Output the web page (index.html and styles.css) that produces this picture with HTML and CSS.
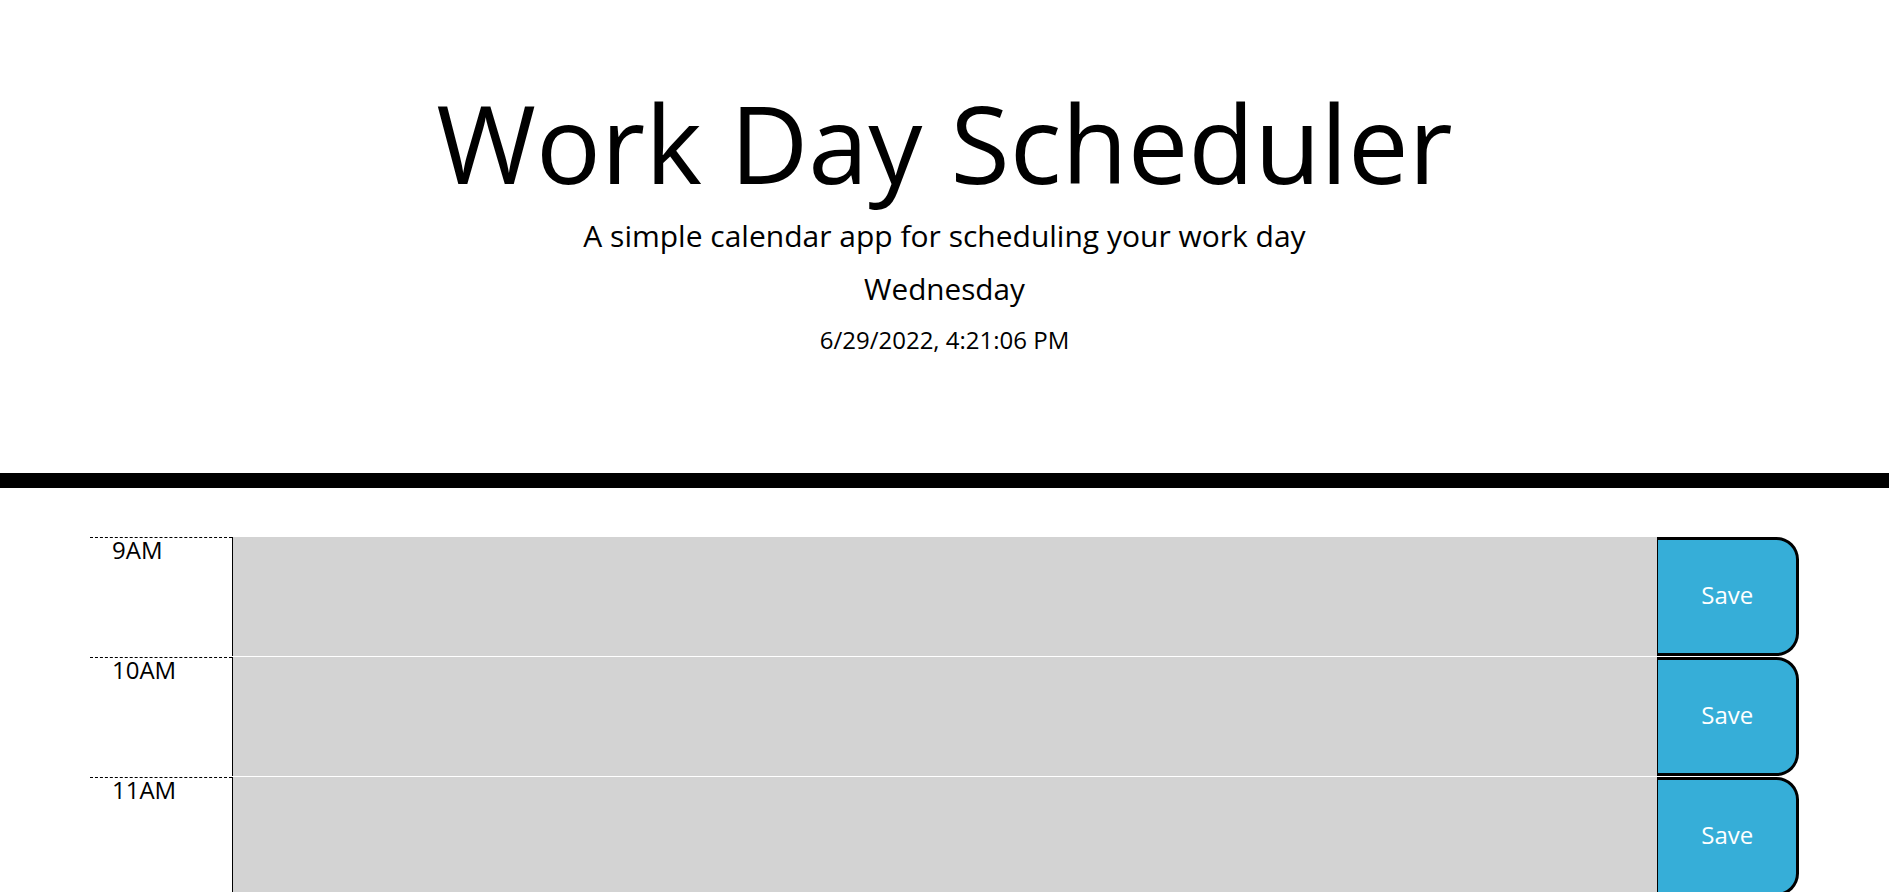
FILE: index.html
```html
<!DOCTYPE html>
<html lang="en">
<head>
<meta charset="UTF-8">
<title>Work Day Scheduler</title>
<link rel="stylesheet" href="styles.css">
</head>
<body>
<header class="jumbotron">
  <h1 class="title">Work Day Scheduler</h1>
  <p class="lead">A simple calendar app for scheduling your work day</p>
  <p class="day">Wednesday</p>
  <p class="date">6/29/2022, 4:21:06 PM</p>
</header>
<main class="container">
  <div class="row time-block">
    <div class="hour">9AM</div>
    <textarea class="description past"></textarea>
    <button class="saveBtn">Save</button>
  </div>
  <div class="row time-block">
    <div class="hour">10AM</div>
    <textarea class="description past"></textarea>
    <button class="saveBtn">Save</button>
  </div>
  <div class="row time-block">
    <div class="hour">11AM</div>
    <textarea class="description past"></textarea>
    <button class="saveBtn">Save</button>
  </div>
</main>
</body>
</html>
```
FILE: styles.css
```css
* {
  box-sizing: border-box;
}

html,
body {
  margin: 0;
  padding: 0;
}

body {
  font-family: "Open Sans", "Noto Sans", sans-serif;
  font-size: 24px;
  line-height: 1;
  color: #000;
  background: #fff;
}

.jumbotron {
  text-align: center;
  padding: 89px 48px 121px;
  border-bottom: 15px solid #000;
  margin-bottom: 48px;
}

.title {
  margin: 0;
  font-size: 108px;
  font-weight: 400;
  line-height: 108px;
}

.lead {
  margin: 24px 0 0;
  font-size: 30px;
  line-height: 30px;
}

.day {
  margin: 23px 0 0;
  font-size: 29.7px;
  line-height: 30px;
}

.date {
  margin: 24px 0 0;
  font-size: 24px;
  line-height: 24px;
}

.container {
  width: 1710px;
  margin: 0 auto;
}

.row {
  display: flex;
  height: 120px;
  border-top: 1px solid #fff;
}

.hour {
  flex: 0 0 8.3333%;
  background: #fff;
  border-top: 1px dashed #000;
  padding-left: 22.5px;
  text-align: left;
}

.description {
  flex: 0 0 83.3333%;
  height: 100%;
  margin: 0;
  border: none;
  border-left: 1px solid #000;
  resize: none;
  padding: 15px;
  font: inherit;
  color: #000;
}

.past {
  background: #d3d3d3;
}

.saveBtn {
  flex: 0 0 8.3333%;
  height: 100%;
  margin: 0;
  background: #36aed8;
  color: #fff;
  border: 3px solid #000;
  border-left-width: 1px;
  border-radius: 0 22.5px 22.5px 0;
  font-family: "Open Sans", "Noto Sans", sans-serif;
  font-size: 24px;
  padding: 0 0 5px;
}
```
